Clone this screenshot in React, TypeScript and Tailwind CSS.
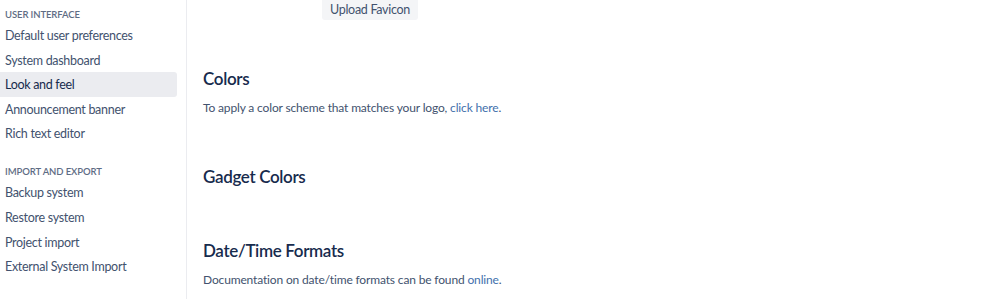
import React from "react";

const font = { fontFamily: 'Lato, "Open Sans", sans-serif' };

function SectionLabel({ children }: { children: React.ReactNode }) {
  return (
    <div className="h-[16px] flex items-center pl-[5px] text-[9.5px] font-semibold uppercase tracking-[-0.1px] text-[#5e6c84]">
      {children}
    </div>
  );
}

function Item({ label, active }: { label: string; active?: boolean }) {
  return (
    <div
      className={
        "h-[24.6px] flex items-center pl-[5px] mr-[9px] rounded-r-[3px] text-[12.5px] tracking-[-0.3px] " +
        (active ? "bg-[#ebecf0] text-[#172b4d]" : "text-[#42526e]")
      }
    >
      <span className="translate-y-[1px]">{label}</span>
    </div>
  );
}

export default function App() {
  return (
    <div className="w-[998px] h-[299px] overflow-hidden bg-white flex" style={font}>
      <aside className="w-[187px] shrink-0 border-r border-[#ebecf0] pt-[7px]">
        <SectionLabel>User interface</SectionLabel>
        <Item label="Default user preferences" />
        <Item label="System dashboard" />
        <Item label="Look and feel" active />
        <Item label="Announcement banner" />
        <Item label="Rich text editor" />
        <div className="h-[18.5px]" />
        <SectionLabel>Import and export</SectionLabel>
        <Item label="Backup system" />
        <Item label="Restore system" />
        <Item label="Project import" />
        <Item label="External System Import" />
      </aside>
      <main className="flex-1 pl-[16px]">
        <div className="pl-[119px]">
          <div className="w-[96px] h-[21px] -mt-[1px] pt-[2px] rounded-b-[3px] bg-[#f4f5f7] text-[#42526e] text-[12.5px] tracking-[-0.3px] flex items-center justify-center">
            Upload Favicon
          </div>
        </div>
        <h2 className="mt-[49px] text-[17px] font-semibold tracking-[-0.35px] text-[#172b4d] leading-[20px]">Colors</h2>
        <p className="mt-[11px] text-[12px] tracking-[-0.15px] text-[#42526e] leading-[16px]">
          To apply a color scheme that matches your logo, <span className="text-[#3f70ac]">click here</span>.
        </p>
        <h2 className="mt-[51px] text-[17px] font-semibold tracking-[-0.35px] text-[#172b4d] leading-[20px]">Gadget Colors</h2>
        <h2 className="mt-[54px] text-[17px] font-semibold tracking-[-0.35px] text-[#172b4d] leading-[20px]">Date/Time Formats</h2>
        <p className="mt-[11px] text-[12px] tracking-[-0.15px] text-[#42526e] leading-[16px]">
          Documentation on date/time formats can be found <span className="text-[#3f70ac]">online</span>.
        </p>
      </main>
    </div>
  );
}
